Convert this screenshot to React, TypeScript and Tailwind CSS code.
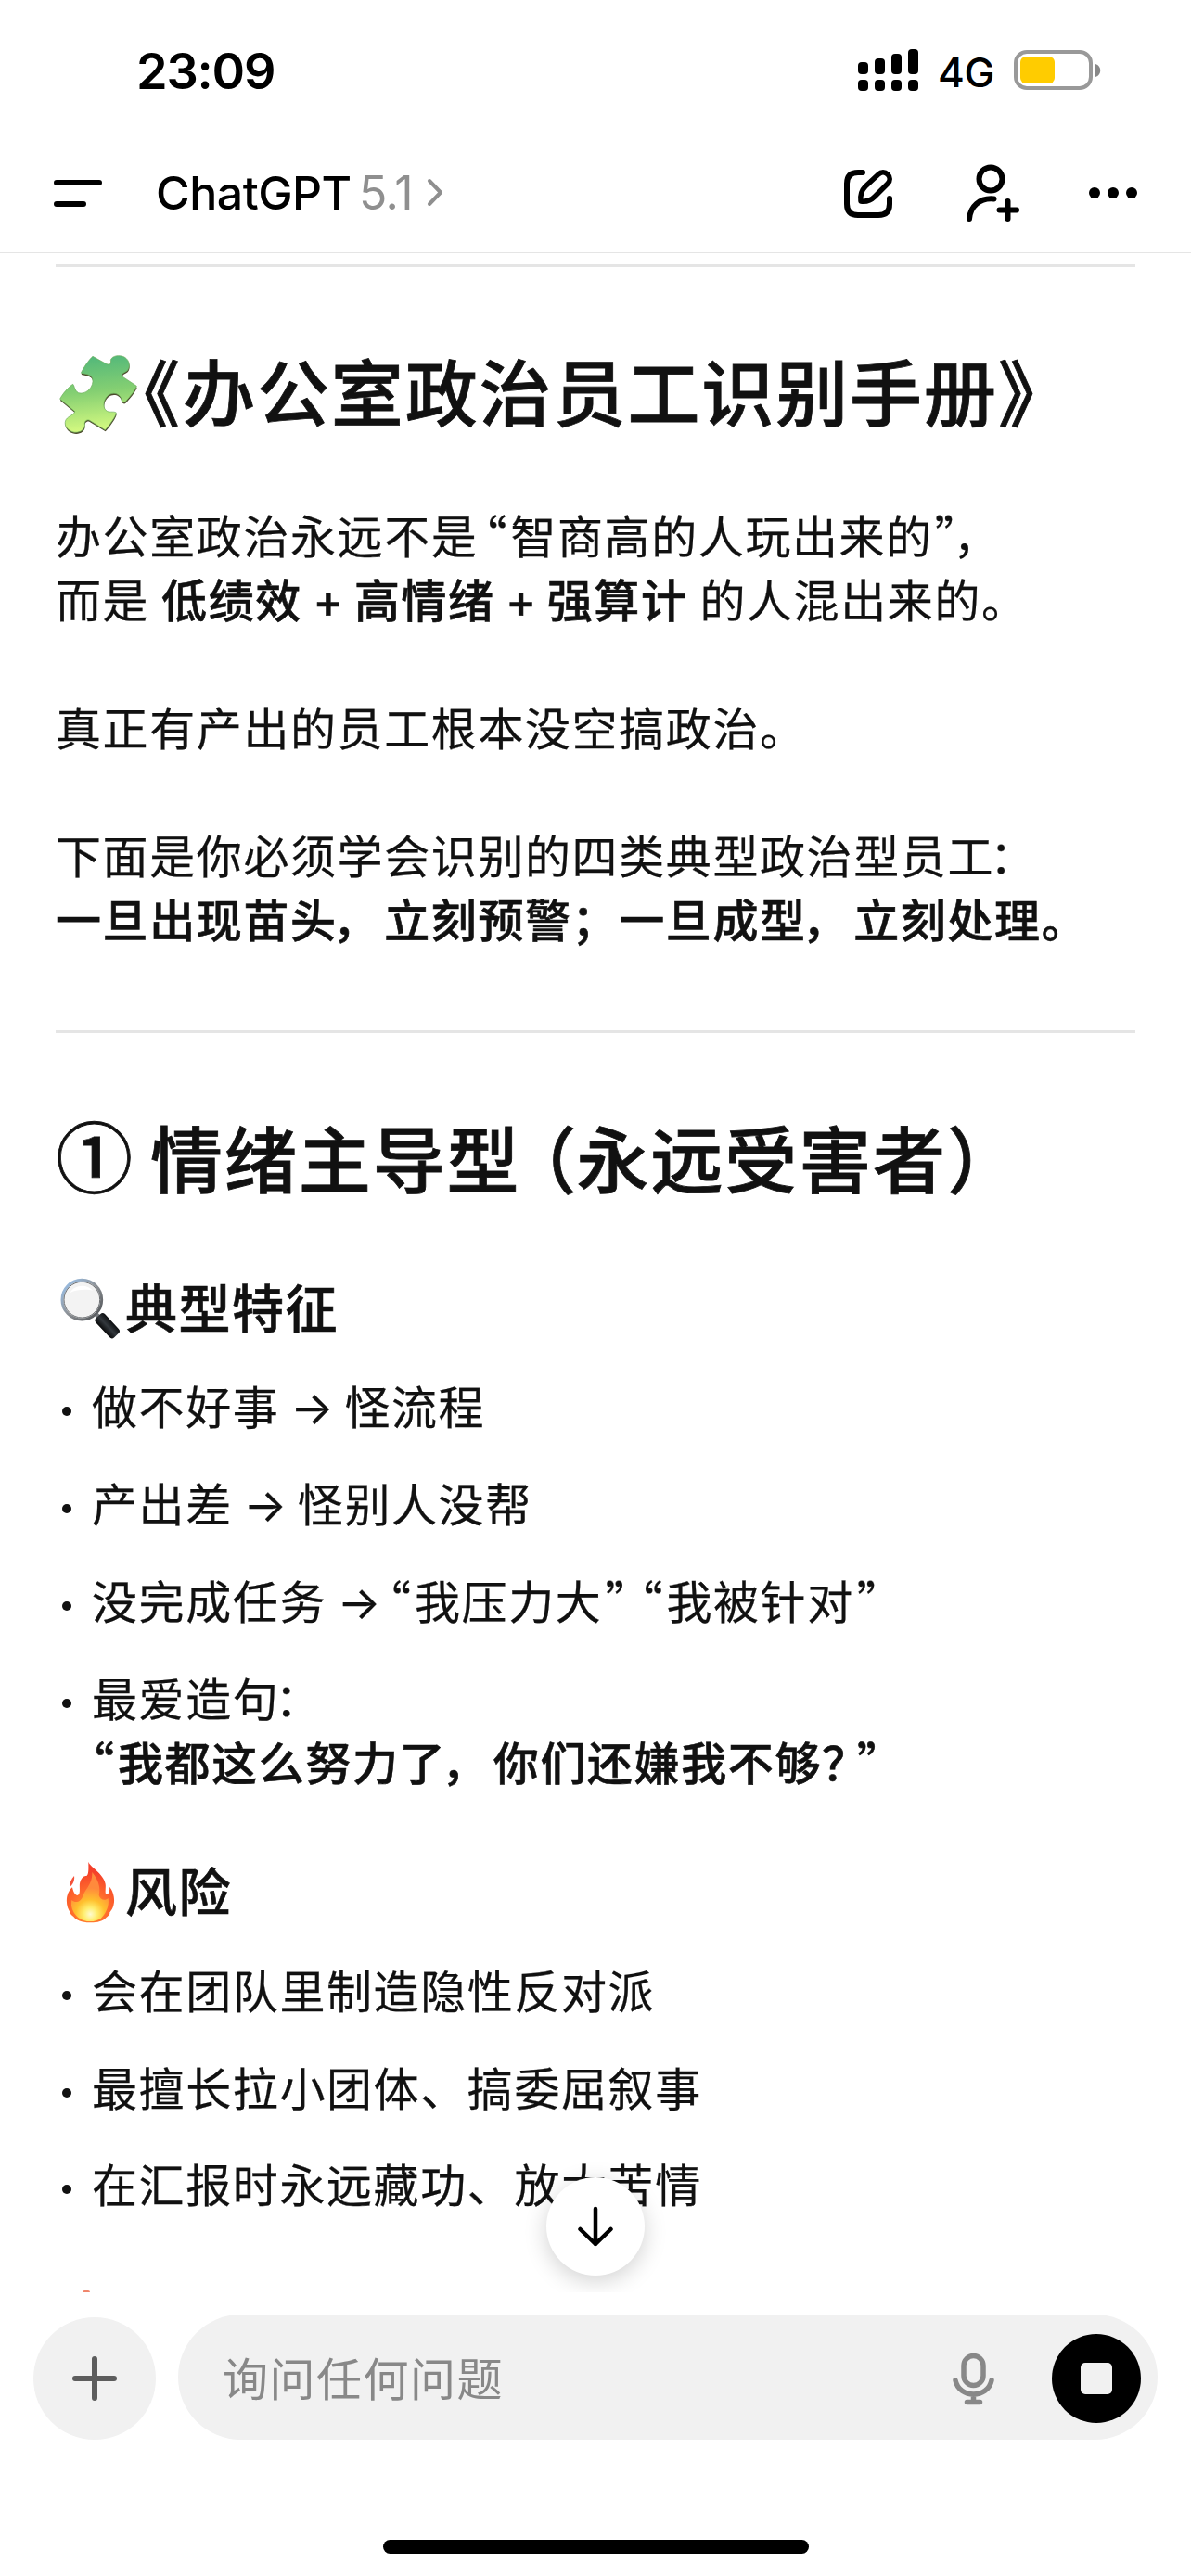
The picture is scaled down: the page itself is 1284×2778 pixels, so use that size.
import type { ReactNode } from "react";

// quotes come from the CJK face in half-width form, the rest inherits
const QUOTE = "font-['Noto_Sans_CJK_SC',sans-serif] [font-feature-settings:'halt'] leading-none";

// opening marks hug the text that follows, closing marks the text before
function Open({ children, className = "" }: { children: ReactNode; className?: string }) {
  return <span className={`inline-flex justify-end whitespace-nowrap tracking-normal ${className}`}>{children}</span>;
}

function Close({ children, className = "" }: { children: ReactNode; className?: string }) {
  return <span className={`inline-flex justify-start whitespace-nowrap tracking-normal ${className}`}>{children}</span>;
}

// full-width comma or colon pulled towards the previous character
function Mark({ children }: { children: ReactNode }) {
  return <span className="-ml-[5px] mr-[5px]">{children}</span>;
}

function Arrow() {
  return <span className="inline-flex w-[70px] justify-center tracking-normal">→</span>;
}

function Plus() {
  return <span className="inline-flex w-[56px] justify-center tracking-normal">+</span>;
}

function Strong({ children }: { children: ReactNode }) {
  return <strong className="font-medium [-webkit-text-stroke:0.6px_#111]">{children}</strong>;
}

function Title({ children, className = "" }: { children: ReactNode; className?: string }) {
  return (
    <h2
      className={`flex h-24 items-center whitespace-nowrap text-[78px] leading-[96px] font-medium tracking-[1.9px] [-webkit-text-stroke:0.8px_#111] ${className}`}
    >
      {children}
    </h2>
  );
}

function Subtitle({ icon, children, className = "" }: { icon: ReactNode; children: ReactNode; className?: string }) {
  return (
    <h3
      className={`flex h-[70px] items-center text-[56px] leading-[70px] font-medium tracking-[1.5px] [-webkit-text-stroke:0.6px_#111] ${className}`}
    >
      {icon}
      <span>{children}</span>
    </h3>
  );
}

function Item({ children }: { children: ReactNode }) {
  return (
    <li className="flex items-start whitespace-nowrap">
      <span className="mt-[33px] mr-[22px] ml-[7px] size-[10px] shrink-0 rounded-full bg-[#111]" />
      <div>{children}</div>
    </li>
  );
}

function Divider({ className = "" }: { className?: string }) {
  return <hr className={`h-[3px] border-0 bg-[#e5e5e5] ${className}`} />;
}

function PuzzleIcon() {
  const d =
    "M150 40L193 64C205 70 211 64 208 52C212 38 235 34 252 42C270 52 272 74 262 86C250 94 242 96 244 104L292 136C288 150 266 176 254 188C246 190 242 184 242 176C236 160 215 154 200 166C184 180 182 204 192 214C202 224 216 216 226 222C226 232 205 262 190 278L138 246C128 244 122 252 124 262C124 280 104 290 84 284C62 276 56 256 64 244C72 232 90 230 92 218L44 178C50 164 72 138 86 130C92 136 90 150 104 158C124 164 148 146 150 122C152 98 130 98 112 94C118 80 138 50 150 40Z";
  return (
    <svg className="h-[92px] w-[88px] shrink-0" viewBox="30 27 264 276">
      <defs>
        <linearGradient id="puzzle" x1="0" y1="0" x2="0.1" y2="1">
          <stop offset="0" stopColor="#4db57b" />
          <stop offset="0.5" stopColor="#84cf72" />
          <stop offset="1" stopColor="#d3f980" />
        </linearGradient>
      </defs>
      <path d={d} fill="#4c4a2c" transform="translate(1 5)" />
      <path d={d} fill="url(#puzzle)" stroke="#6cae5c" strokeWidth="2" strokeLinejoin="round" />
    </svg>
  );
}

function MagnifierIcon() {
  return (
    <svg className="h-[72px] w-[75px] shrink-0" viewBox="30 27 225 216">
      <defs>
        <linearGradient id="rim" x1="0" y1="0" x2="1" y2="1">
          <stop offset="0" stopColor="#9cc6f2" />
          <stop offset="0.5" stopColor="#8d9196" />
          <stop offset="1" stopColor="#4a4d50" />
        </linearGradient>
        <linearGradient id="handle" x1="0" y1="0" x2="0" y2="1">
          <stop offset="0" stopColor="#0c0e10" />
          <stop offset="0.5" stopColor="#33383d" />
          <stop offset="1" stopColor="#08090a" />
        </linearGradient>
      </defs>
      <path d="M158 148L172 162" stroke="#777b7f" strokeWidth="14" />
      <rect x="154" y="168" width="86" height="40" rx="11" fill="url(#handle)" transform="rotate(47 197 188)" />
      <circle cx="115" cy="104" r="64" fill="#f3f3f3" stroke="url(#rim)" strokeWidth="9" />
      <circle cx="115" cy="104" r="58" fill="none" stroke="#6d7073" strokeWidth="3" />
      <path d="M76 82C88 56 130 50 150 74C132 70 98 70 76 82Z" fill="#fff" />
    </svg>
  );
}

function FireIcon() {
  return (
    <svg className="h-[72px] w-[75px] shrink-0" viewBox="180 130 225 216">
      <defs>
        <radialGradient id="flame" gradientUnits="userSpaceOnUse" cx="290" cy="290" r="120">
          <stop offset="0" stopColor="#ffa62b" />
          <stop offset="0.5" stopColor="#ff6a2c" />
          <stop offset="1" stopColor="#f4402a" />
        </radialGradient>
        <radialGradient id="core" gradientUnits="userSpaceOnUse" cx="292" cy="308" r="85">
          <stop offset="0" stopColor="#fffbd2" />
          <stop offset="0.25" stopColor="#ffee70" />
          <stop offset="0.55" stopColor="#ffc02e" />
          <stop offset="1" stopColor="#ff8a3c" />
        </radialGradient>
      </defs>
      <path
        d="M286 138C290 155 335 175 341 210C343 225 338 240 344 244C352 245 356 232 354 219C366 232 372 258 368 275C366 290 358 298 354 304C358 306 350 314 344 318C335 330 310 336 290 335C265 335 245 326 238 316C232 312 226 306 228 303C218 290 213 270 217 250C220 236 228 226 234 221C236 230 240 246 250 247C262 244 256 222 258 208C262 190 272 182 280 184C288 180 286 155 286 138Z"
        fill="url(#flame)"
      />
      <path d="M240 184C242 196 238 208 228 218C224 210 228 198 240 184Z" fill="#f4513a" />
      <path
        d="M298 172C318 196 326 222 320 246C324 262 340 266 350 256C354 280 344 304 326 322C306 336 270 334 252 318C234 302 228 280 232 262C244 274 262 268 268 250C274 226 300 212 298 172Z"
        fill="url(#core)"
      />
    </svg>
  );
}

function StatusBar() {
  return (
    <div className="flex h-[155px] items-start pt-[53px]">
      <span className="ml-[147px] h-12 w-[150px] text-[54px] leading-12 font-semibold tracking-[-1.2px]">23:09</span>
      <svg className="ml-[628px] h-[45px] w-[65px]" viewBox="0 0 65 45">
        <rect x="0" y="14" width="11" height="13" rx="4" />
        <rect x="18" y="10" width="11" height="17" rx="4" />
        <rect x="36" y="5" width="11" height="22" rx="4" />
        <rect x="54" y="0" width="11" height="27" rx="4" />
        <rect x="0" y="33" width="11" height="12" rx="4" />
        <rect x="18" y="33" width="11" height="12" rx="4" />
        <rect x="36" y="33" width="11" height="12" rx="4" />
        <rect x="54" y="33" width="11" height="12" rx="4" />
      </svg>
      <span className="mt-px ml-[21px] h-12 w-[60px] text-[44px] leading-12 font-medium tracking-[-0.5px]">4G</span>
      <svg className="mt-px ml-[22px] h-[43px] w-[95px]" viewBox="0 0 95 43">
        <rect x="2" y="2" width="81" height="39" rx="12" fill="none" stroke="#999" strokeWidth="4" />
        <rect x="7" y="7" width="37" height="29" rx="6" fill="#ffcc00" />
        <path d="M88 15C95 17 95 27 88 29Z" fill="#888" />
      </svg>
    </div>
  );
}

function Header() {
  return (
    <header className="flex h-[118px] items-center border-b border-[#e5e5e5] pb-3">
      <svg className="ml-[58px] h-[30px] w-[52px]" viewBox="0 0 52 30" fill="none" stroke="#000" strokeWidth="6" strokeLinecap="round">
        <path d="M3 4H49M3 27H32" />
      </svg>
      <span className="ml-[58px] w-[210px] text-[50px] leading-[60px] font-medium tracking-[-0.5px]">ChatGPT</span>
      <span className="ml-[9px] w-[62px] text-[50px] leading-[60px] tracking-[-0.5px] text-[#8f8f8f]">5.1</span>
      <svg className="ml-[10px] h-[31px] w-[20px]" viewBox="0 0 20 31" fill="none" stroke="#8f8f8f" strokeWidth="4" strokeLinecap="round" strokeLinejoin="round">
        <path d="M4 3L16 15.500L4 28" />
      </svg>
      <svg className="ml-[411px] h-[64px] w-[340px]" viewBox="890 175 340 64" fill="none" stroke="#000" strokeWidth="6" strokeLinecap="round" strokeLinejoin="round">
        {/* compose */}
        <path d="M930 185H925Q913 185 913 197V219Q913 231 925 231H947Q959 231 959 219V213" />
        <path d="M928 216C927 208 929 204 933 200L947 187C950 184 954 184 957 187C960 190 960 194 957 197L943 211C939 215 935 217 928 216Z" strokeWidth="5.500" />
        {/* invite */}
        <circle cx="1068" cy="192" r="12.500" />
        <path d="M1071.500 213.500C1056 212 1046 222 1045 235M1077.500 225.500H1096M1086.500 216V235" />
        {/* more */}
        <g fill="#000" stroke="none">
          <circle cx="1180" cy="207" r="6" />
          <circle cx="1200" cy="207" r="6" />
          <circle cx="1220" cy="207" r="6" />
        </g>
      </svg>
    </header>
  );
}

function Composer() {
  return (
    <footer className="h-[306px]">
      <div className="flex items-end pt-6 pl-9">
        <button className="flex size-[132px] items-center justify-center rounded-full bg-[#f1f1f1]">
          <svg className="size-12" viewBox="0 0 48 48" fill="none" stroke="#5d5d5d" strokeWidth="6" strokeLinecap="round">
            <path d="M3 24H45M24 3V45" />
          </svg>
        </button>
        <div className="ml-6 flex h-[135px] w-[1056px] items-center rounded-full bg-[#f1f1f1]">
          <span className="mt-[6px] ml-[48px] w-[310px] whitespace-nowrap text-[49px] leading-[60px] tracking-[1.5px] text-[#888]">询问任何问题</span>
          <svg className="mt-[3px] ml-[475px] h-[57px] w-[49px]" viewBox="0 0 49 57" fill="none" stroke="#888" strokeWidth="5.500" strokeLinecap="round">
            <rect x="14" y="3.500" width="21" height="32" rx="10.500" />
            <path d="M5 30C9 50 40 50 44 30M24.500 45V53M17.500 53.500H31.500" />
          </svg>
          <button className="mt-[3px] ml-[60px] flex size-24 items-center justify-center rounded-full bg-black">
            <span className="h-[34px] w-[34px] rounded-[5px] bg-[#f1f1f1]" />
          </button>
        </div>
      </div>
      <div className="mx-auto mt-[108px] h-[15px] w-[459px] rounded-full bg-black" />
    </footer>
  );
}

export default function App() {
  return (
    <div lang="zh-CN" className="flex h-[2778px] w-[1284px] flex-col overflow-hidden bg-white font-['Inter','Noto_Sans_CJK_SC',sans-serif] text-black">
      <StatusBar />
      <Header />

      <main className="relative h-[2199px] overflow-hidden px-[60px] pt-[12px] text-[49px] leading-[69px] tracking-[1.6px] text-[#111] [-webkit-text-stroke:0.25px_#111]">
        <Divider />

        <Title className="mt-[90px]">
          <PuzzleIcon />
          <Open className="w-[49px] pr-[3px] [font-feature-settings:'halt']">《</Open>
          <span>办公室政治员工识别手册</span>
          <Close>》</Close>
        </Title>

        <p className="mt-[71px] whitespace-nowrap [word-spacing:-2.5px]">
          办公室政治永远不是<Open className={`w-[35px] pr-1 ${QUOTE}`}>“</Open>智商高的人玩出来的<Close className={`w-[27px] pl-0.5 ${QUOTE}`}>”</Close><Mark>，</Mark><br />
          而是 <Strong>低绩效<Plus />高情绪<Plus />强算计</Strong> 的人混出来的。
        </p>
        <p className="mt-[69px]">真正有产出的员工根本没空搞政治。</p>
        <p className="mt-[69px] whitespace-nowrap">
          下面是你必须学会识别的四类典型政治型员工<Mark>：</Mark><br />
          <Strong>一旦出现苗头<Mark>，</Mark>立刻预警；一旦成型<Mark>，</Mark>立刻处理。</Strong>
        </p>

        <Divider className="mt-[83px]" />

        <Title className="mt-[91px]">
          <Close className="-mt-[18px] w-[102px] font-['Noto_Sans_CJK_SC',sans-serif] text-[83px]">①</Close>
          <span>情绪主导型</span>
          <Open className="w-[60px] [font-feature-settings:'halt']">（</Open>
          <span>永远受害者</span>
          <Close>）</Close>
        </Title>

        <Subtitle icon={<MagnifierIcon />} className="mt-[76px]">
          典型特征
        </Subtitle>
        <ul className="mt-[37px] flex flex-col gap-9">
          <Item>做不好事<Arrow />怪流程</Item>
          <Item>产出差<Arrow />怪别人没帮</Item>
          <Item>
            没完成任务<Arrow />
            <Open className={`w-[25px] pr-1 ${QUOTE}`}>“</Open>我压力大<Close className={`w-[27px] pl-[3px] ${QUOTE}`}>”</Close>
            <Open className={`w-[42px] pr-1 ${QUOTE}`}>“</Open>我被针对<Close className={`w-[27px] pl-[3px] ${QUOTE}`}>”</Close>
          </Item>
          <Item>
            最爱造句<Mark>：</Mark><br />
            <Strong>
              <Open className={`w-[28px] pr-1 ${QUOTE}`}>“</Open>我都这么努力了<Mark>，</Mark>你们还嫌我不够
              <Close className={`w-[35px] ${QUOTE}`}>？</Close>
              <Close className={`w-[27px] pl-[3px] ${QUOTE}`}>”</Close>
            </Strong>
          </Item>
        </ul>

        <Subtitle icon={<FireIcon />} className="mt-[69px]">
          风险
        </Subtitle>
        <ul className="mt-[38px] flex flex-col gap-[35.700px]">
          <Item>会在团队里制造隐性反对派</Item>
          <Item>最擅长拉小团体、搞委屈叙事</Item>
          <Item>在汇报时永远藏功、放大苦情</Item>
        </ul>

        {/* top edge of the next section's icon, cut off by the composer */}
        <span className="absolute bottom-0 left-[89px] h-[2px] w-2 rounded-t-full bg-[#f0866c]" />

        <button className="absolute bottom-[18px] left-[589px] flex size-[106px] items-center justify-center rounded-full bg-white shadow-[0_6px_24px_rgba(0,0,0,0.18)]">
          <svg className="h-[44px] w-[40px]" viewBox="0 0 40 44" fill="none" stroke="#000" strokeWidth="4.500" strokeLinecap="round" strokeLinejoin="round">
            <path d="M20 3V41M3.500 25L20 41L36.500 25" />
          </svg>
        </button>
      </main>

      <Composer />
    </div>
  );
}
